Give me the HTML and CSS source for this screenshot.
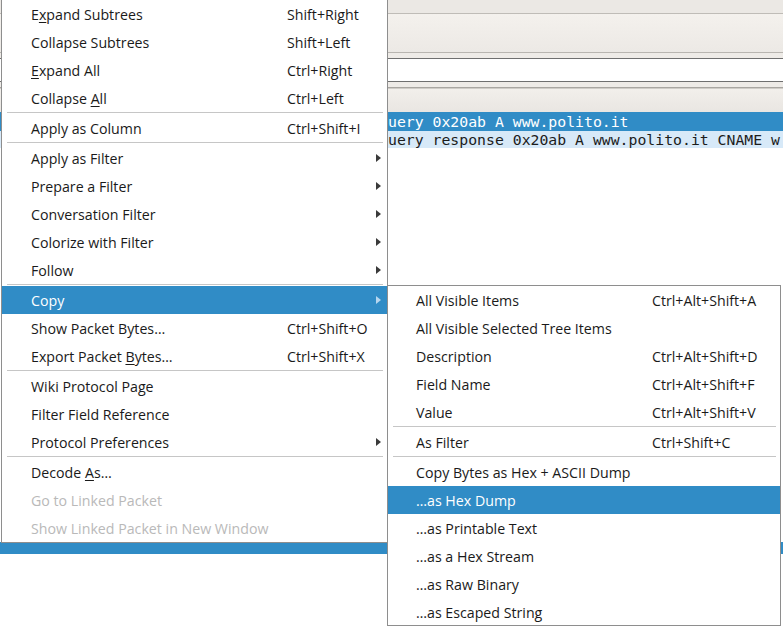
FILE: index.html
```html
<!DOCTYPE html>
<html>
<head>
<meta charset="utf-8">
<link rel="stylesheet" href="styles.css">
</head>
<body>
<div class="app">
  <div class="titlebar"></div>
  <div class="toolbar"></div>
  <div class="gap"></div>
  <div class="filter"></div>
  <div class="gap2"></div>
  <div class="header"></div>
  <div class="row sel"><span class="mono">uery 0x20ab A www.polito.it</span></div>
  <div class="row alt"><span class="mono">uery response 0x20ab A www.polito.it CNAME w</span></div>
  <div class="list"></div>
  <div class="detail-sel"></div>
  <div class="rest"></div>
</div>

<div class="menu main">
  <div class="item"><span class="lbl">E<u>x</u>pand Subtrees</span><span class="sc">Shift+Right</span><span></span></div>
  <div class="item"><span class="lbl">Collapse Subtrees</span><span class="sc">Shift+Left</span><span></span></div>
  <div class="item"><span class="lbl"><u>E</u>xpand All</span><span class="sc">Ctrl+Right</span><span></span></div>
  <div class="item"><span class="lbl">Collapse <u>A</u>ll</span><span class="sc">Ctrl+Left</span><span></span></div>
  <div class="sep"></div>
  <div class="item"><span class="lbl">Apply as Column</span><span class="sc">Ctrl+Shift+I</span><span></span></div>
  <div class="sep"></div>
  <div class="item"><span class="lbl">Apply as Filter</span><span class="sc"></span><span class="arrow"></span></div>
  <div class="item"><span class="lbl">Prepare a Filter</span><span class="sc"></span><span class="arrow"></span></div>
  <div class="item"><span class="lbl">Conversation Filter</span><span class="sc"></span><span class="arrow"></span></div>
  <div class="item"><span class="lbl">Colorize with Filter</span><span class="sc"></span><span class="arrow"></span></div>
  <div class="item"><span class="lbl">Follow</span><span class="sc"></span><span class="arrow"></span></div>
  <div class="sep"></div>
  <div class="item active"><span class="lbl">Copy</span><span class="sc"></span><span class="arrow"></span></div>
  <div class="item"><span class="lbl">Show Packet Bytes…</span><span class="sc">Ctrl+Shift+O</span><span></span></div>
  <div class="item"><span class="lbl">Export Packet <u>B</u>ytes…</span><span class="sc">Ctrl+Shift+X</span><span></span></div>
  <div class="sep"></div>
  <div class="item"><span class="lbl">Wiki Protocol Page</span><span class="sc"></span><span></span></div>
  <div class="item"><span class="lbl">Filter Field Reference</span><span class="sc"></span><span></span></div>
  <div class="item"><span class="lbl">Protocol Preferences</span><span class="sc"></span><span class="arrow"></span></div>
  <div class="sep"></div>
  <div class="item"><span class="lbl">Decode <u>A</u>s…</span><span class="sc"></span><span></span></div>
  <div class="item disabled"><span class="lbl">Go to Linked Packet</span><span class="sc"></span><span></span></div>
  <div class="item disabled"><span class="lbl">Show Linked Packet in New Window</span><span class="sc"></span><span></span></div>
</div>

<div class="menu sub">
  <div class="item"><span class="lbl">All Visible Items</span><span class="sc">Ctrl+Alt+Shift+A</span></div>
  <div class="item"><span class="lbl">All Visible Selected Tree Items</span><span class="sc"></span></div>
  <div class="item"><span class="lbl">Description</span><span class="sc">Ctrl+Alt+Shift+D</span></div>
  <div class="item"><span class="lbl">Field Name</span><span class="sc">Ctrl+Alt+Shift+F</span></div>
  <div class="item"><span class="lbl">Value</span><span class="sc">Ctrl+Alt+Shift+V</span></div>
  <div class="sep"></div>
  <div class="item"><span class="lbl">As Filter</span><span class="sc">Ctrl+Shift+C</span></div>
  <div class="sep"></div>
  <div class="item"><span class="lbl">Copy Bytes as Hex + ASCII Dump</span><span class="sc"></span></div>
  <div class="item active"><span class="lbl">…as Hex Dump</span><span class="sc"></span></div>
  <div class="item"><span class="lbl">…as Printable Text</span><span class="sc"></span></div>
  <div class="item"><span class="lbl">…as a Hex Stream</span><span class="sc"></span></div>
  <div class="item"><span class="lbl">…as Raw Binary</span><span class="sc"></span></div>
  <div class="item"><span class="lbl">…as Escaped String</span><span class="sc"></span></div>
</div>
</body>
</html>
```

FILE: styles.css
```css
html, body {
  margin: 0;
  padding: 0;
  width: 783px;
  height: 627px;
  overflow: hidden;
  background: #ffffff;
}

.app {
  display: flex;
  flex-direction: column;
  height: 627px;
}

.titlebar {
  height: 13px;
  background: #ebe8e4;
  border-bottom: 1px solid #bfbcb7;
}

.toolbar {
  height: 38px;
  background: linear-gradient(#f4f1ed, #ece9e5);
  border-bottom: 1px solid #b8b5b0;
}

.gap {
  height: 5px;
  background: #eeebe7;
}

.filter {
  height: 22px;
  background: #ffffff;
  border-top: 1px solid #6f6f6f;
  border-bottom: 1px solid #6f6f6f;
}

.gap2 {
  height: 5px;
  background: #eeebe7;
  border-bottom: 1px solid #a9a6a1;
}

.header {
  height: 23px;
  background: linear-gradient(#f2efeb, #e9e6e2);
  border-top: 1px solid #d0cdc8;
}

.row {
  height: 18px;
  display: flex;
  align-items: center;
  padding-left: 388px;
  overflow: hidden;
}

.row.sel {
  height: 19px;
  background: #308cc6;
  color: #ffffff;
}

.row.alt {
  height: 17px;
  background: #d7e9f8;
  color: #1c1c1c;
}

.mono {
  font-family: "DejaVu Sans Mono", "Liberation Mono", monospace;
  font-size: 14.8px;
  white-space: nowrap;
}

.list {
  flex: 0 0 394px;
  background: #ffffff;
}

.detail-sel {
  flex: 0 0 12px;
  background: #308cc6;
}

.rest {
  flex: 1;
  background: #ffffff;
}

/* Menus */
.menu {
  position: absolute;
  background: #ffffff;
  border: 1px solid #8e8e8e;
  font-family: "Open Sans", "Noto Sans", sans-serif;
  font-size: 14.2px;
  color: #1a1a1a;
  box-sizing: border-box;
}

.menu.main {
  left: 1px;
  top: -2px;
  width: 387px;
  padding-top: 1px;
}

.menu.sub {
  left: 387px;
  top: 285px;
  width: 394px;
  height: 341px;
}

.item {
  height: 28px;
  display: grid;
  align-items: center;
  white-space: nowrap;
}

.main .item {
  grid-template-columns: 256px 1fr 11px;
  padding-left: 29px;
}

.sub .item {
  grid-template-columns: 236px 1fr;
  padding-left: 28px;
}

.item u {
  text-decoration: underline;
  text-underline-offset: 2px;
}

.item.active {
  background: #308cc6;
  color: #ffffff;
}

.item.disabled {
  color: #b9b9b9;
}

.sep {
  height: 2px;
  box-sizing: border-box;
  border-top: 1px solid #c6c6c6;
  margin: 0 4px 0 5px;
}

.arrow {
  width: 0;
  height: 0;
  border-top: 4px solid transparent;
  border-bottom: 4px solid transparent;
  border-left: 5px solid #3a3a3a;
  justify-self: start;
}

.item.active .arrow {
  border-left-color: #b7d6ee;
}
```
